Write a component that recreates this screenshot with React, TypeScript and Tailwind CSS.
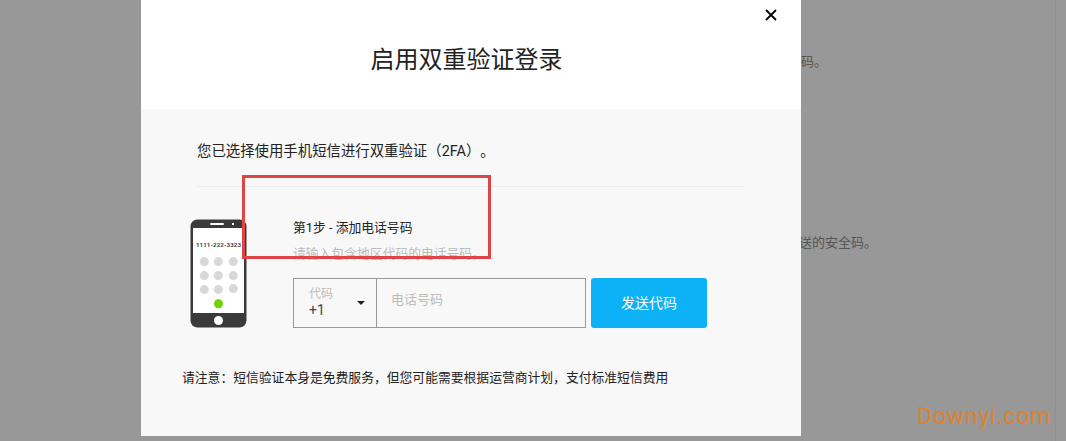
const cjk = "font-['Roboto','Noto_Sans_CJK_SC',sans-serif]";

function PhoneArt() {
  const keys = [
    [14.3, 42.6], [28.3, 42.6], [43.3, 42.6],
    [14.3, 56.6], [28.3, 56.6], [43.3, 56.6],
    [14.3, 70.6], [28.3, 70.6], [43.3, 69.6],
  ];
  return (
    <svg width="57" height="110" viewBox="0 0 57 110" className="shrink-0">
      <rect x="0.5" y="0.5" width="56" height="108" rx="7" fill="#3a3a3a" />
      <rect x="3" y="9" width="51" height="85" fill="#ffffff" />
      <rect x="20" y="4" width="14" height="2" rx="1" fill="#ffffff" />
      <rect x="42" y="4" width="2" height="2" fill="#ffffff" />
      <text x="28.5" y="27.5" textAnchor="middle" fontSize="6.2" fontWeight="700" fill="#444444" fontFamily="Roboto, sans-serif" letterSpacing="0.1">
        1111-222-3323
      </text>
      {keys.map(([cx, cy]) => (
        <circle key={`${cx}-${cy}`} cx={cx} cy={cy} r="4.5" fill="#d8d8d8" />
      ))}
      <circle cx="28.5" cy="84.7" r="4.5" fill="#6fd100" />
      <circle cx="28.5" cy="101.5" r="4.5" fill="#ffffff" />
    </svg>
  );
}

export default function App() {
  return (
    <div className={`relative h-[441px] w-[1066px] overflow-hidden bg-[#989898] [text-spacing-trim:space-all] ${cjk}`}>
      {/* page behind the overlay */}
      <div className="absolute left-[801px] top-[54px] text-[13px] leading-4 text-[#555555]">码。</div>
      <div className="absolute left-[799px] top-[235px] text-[13px] leading-4 text-[#555555]">送的安全码。</div>
      <div className="absolute right-[10px] top-0 h-full w-px bg-[#909090]" />

      <div className="relative ml-[141px] h-[436px] w-[660px]">
        <div className="relative flex h-[109px] items-center justify-center bg-white pr-[9px] pt-[10px]">
          <h1 className="text-2xl font-normal leading-8 text-[#222222]">启用双重验证登录</h1>
          <button className="absolute right-[22px] top-[7px] text-black">
            <svg width="16" height="16" viewBox="0 0 16 16" fill="none" stroke="currentColor" strokeWidth="1.8">
              <path d="M3 3l10 10M13 3L3 13" />
            </svg>
          </button>
        </div>

        <div className="h-[327px] bg-[#f8f8f8] pt-[35px]">
          <div className="mx-[56px] h-[43px] border-b border-[#eeeeee] text-[14.4px] leading-4 text-[#222222]">
            您已选择使用手机短信进行双重验证（2FA）。
          </div>

          <div className="ml-[49px] mt-[32px] flex">
            <PhoneArt />
            <div className="ml-[46px] pt-[1px]">
              <div className="text-[12.8px] leading-4 text-[#222222]">第1步 - 添加电话号码</div>
              <div className="mt-[10px] text-[12.8px] leading-4 text-[#bbbbbb]">请输入包含地区代码的电话号码。</div>
              <div className="mt-[16px] flex">
                <div className="flex h-[50px] w-[293px] border border-[#999999]">
                  <div className="flex w-[83px] items-center border-r border-[#999999] pl-[15px]">
                    <div className="w-[48px] pb-[3px]">
                      <div className="text-xs leading-4 text-[#bbbbbb]">代码</div>
                      <div className="text-sm leading-4 text-[#444444]">+1</div>
                    </div>
                    <div className="h-0 w-0 border-x-[4px] border-t-[4px] border-x-transparent border-t-[#222222]" />
                  </div>
                  <div className="pl-[14px] pt-[13px] text-[13px] leading-4 text-[#bbbbbb]">电话号码</div>
                </div>
                <button className="ml-[5px] h-[50px] w-[116px] rounded-[3px] bg-[#0db1f5] text-sm text-white">发送代码</button>
              </div>
            </div>
          </div>

          <div className="ml-[41px] mt-[41px] text-[12.8px] leading-4 text-[#222222]">
            请注意：短信验证本身是免费服务，但您可能需要根据运营商计划，支付标准短信费用
          </div>
        </div>
      </div>

      {/* red annotation drawn on the screenshot */}
      <div className="absolute left-[242px] top-[175px] h-[84px] w-[249px] border-[3px] border-[#e04545]" />
      {/* site watermark */}
      <div className="absolute left-[917px] top-[405px] text-[23px] leading-6 tracking-[0.8px] text-[#e8801f] opacity-85">Downyi.com</div>
    </div>
  );
}
